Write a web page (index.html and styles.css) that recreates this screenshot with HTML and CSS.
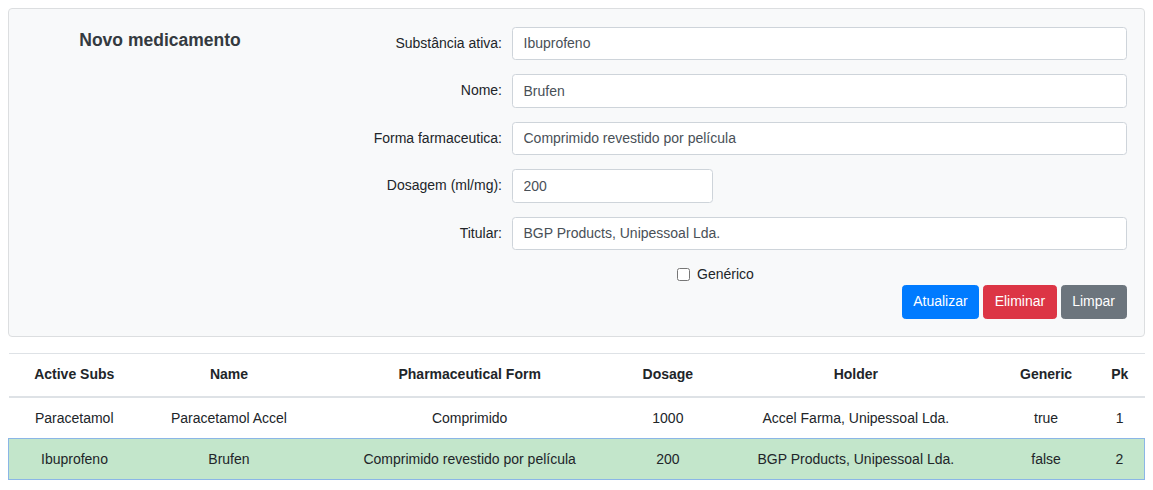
FILE: index.html
```html
<!DOCTYPE html>
<html lang="pt">
<head>
<meta charset="utf-8">
<title>Medicamentos</title>
<link rel="stylesheet" href="styles.css">
</head>
<body>
<div class="card">
  <div class="card-grid">
    <div class="title-col">
      <h5 class="title">Novo medicamento</h5>
    </div>
    <form class="form">
      <div class="form-group">
        <label class="label">Substância ativa:</label>
        <input class="control" type="text" value="Ibuprofeno">
      </div>
      <div class="form-group">
        <label class="label">Nome:</label>
        <input class="control" type="text" value="Brufen">
      </div>
      <div class="form-group">
        <label class="label">Forma farmaceutica:</label>
        <input class="control" type="text" value="Comprimido revestido por película">
      </div>
      <div class="form-group">
        <label class="label">Dosagem (ml/mg):</label>
        <input class="control control-short" type="text" value="200">
      </div>
      <div class="form-group">
        <label class="label">Titular:</label>
        <input class="control" type="text" value="BGP Products, Unipessoal Lda.">
      </div>
      <div class="check-row">
        <input class="check" type="checkbox" id="gen">
        <label class="check-label" for="gen">Genérico</label>
      </div>
      <div class="buttons">
        <button type="button" class="btn btn-primary">Atualizar</button>
        <button type="button" class="btn btn-danger">Eliminar</button>
        <button type="button" class="btn btn-secondary">Limpar</button>
      </div>
    </form>
  </div>
</div>

<table class="table">
  <thead>
    <tr>
      <th>Active Subs</th>
      <th>Name</th>
      <th>Pharmaceutical Form</th>
      <th>Dosage</th>
      <th>Holder</th>
      <th class="col-generic">Generic</th>
      <th>Pk</th>
    </tr>
  </thead>
  <tbody>
    <tr>
      <td>Paracetamol</td>
      <td>Paracetamol Accel</td>
      <td>Comprimido</td>
      <td>1000</td>
      <td>Accel Farma, Unipessoal Lda.</td>
      <td>true</td>
      <td>1</td>
    </tr>
    <tr class="selected">
      <td>Ibuprofeno</td>
      <td>Brufen</td>
      <td>Comprimido revestido por película</td>
      <td>200</td>
      <td>BGP Products, Unipessoal Lda.</td>
      <td>false</td>
      <td>2</td>
    </tr>
  </tbody>
</table>
</body>
</html>
```

FILE: styles.css
```css
html {
  font-size: 14px;
}
body {
  margin: 8px;
  font-family: "Liberation Sans", Arial, sans-serif;
  font-size: 14px;
  line-height: 1.5;
  color: #212529;
  background: #fff;
}
.card {
  background: #f8f9fa;
  border: 1px solid #dcdee0;
  border-radius: 4px;
  padding: 17.5px;
}
.card-grid {
  display: grid;
  grid-template-columns: 267px 1fr;
}
.title-col {
  text-align: center;
}
.title {
  margin: 0;
  padding-top: 3px;
  font-size: 17.5px;
  line-height: 1.2;
  font-weight: 700;
  color: #343a40;
}
.form {
  display: flex;
  flex-direction: column;
}
.form-group {
  display: grid;
  grid-template-columns: 208.5px 1fr;
  column-gap: 10px;
  align-items: center;
  margin-bottom: 14px;
}
.label {
  text-align: right;
  color: #212529;
}
.control {
  box-sizing: border-box;
  height: 33.5px;
  width: 100%;
  padding: 5.25px 10.5px;
  font-family: inherit;
  font-size: 14px;
  line-height: 1.5;
  color: #495057;
  background: #fff;
  border: 1px solid #ced4da;
  border-radius: 3.5px;
}
.control-short {
  width: 201px;
}
.check-row {
  display: flex;
  align-items: center;
  height: 21px;
  margin-left: 383.5px;
}
.check {
  width: 13px;
  height: 13px;
  margin: 0;
}
.check-label {
  margin-left: 7px;
  color: #212529;
}
.buttons {
  display: flex;
  justify-content: flex-end;
  gap: 4px;
}
.btn {
  font-family: inherit;
  font-size: 14px;
  line-height: 1.5;
  padding: 5.25px 10.5px;
  border: 1px solid transparent;
  border-radius: 3.5px;
  color: #fff;
}
.btn-primary {
  background: #007bff;
  border-color: #007bff;
}
.btn-danger {
  background: #dc3545;
  border-color: #dc3545;
}
.btn-secondary {
  background: #6c757d;
  border-color: #6c757d;
}
.table {
  width: 100%;
  margin-top: 16px;
  border-collapse: collapse;
  color: #212529;
}
.table th,
.table td {
  padding: 10.5px;
  text-align: center;
  vertical-align: top;
  border-top: 1px solid #dee2e6;
}
.table thead th {
  padding-top: 9.5px;
  padding-bottom: 11.5px;
  border-bottom: 2px solid #dee2e6;
  font-weight: 700;
}
.table thead th.col-generic {
  padding-left: 11.5px;
  padding-right: 11.5px;
}
.table tbody td {
  padding-top: 9.5px;
  padding-bottom: 9.5px;
}
.table tr.selected td {
  background: #c3e6cb;
  border-top: 1px solid #8bb6e6;
  border-bottom: 1px solid #8bb6e6;
}
.table tr.selected td:first-child {
  border-left: 1px solid #8bb6e6;
}
.table tr.selected td:last-child {
  border-right: 1px solid #8bb6e6;
}
```
